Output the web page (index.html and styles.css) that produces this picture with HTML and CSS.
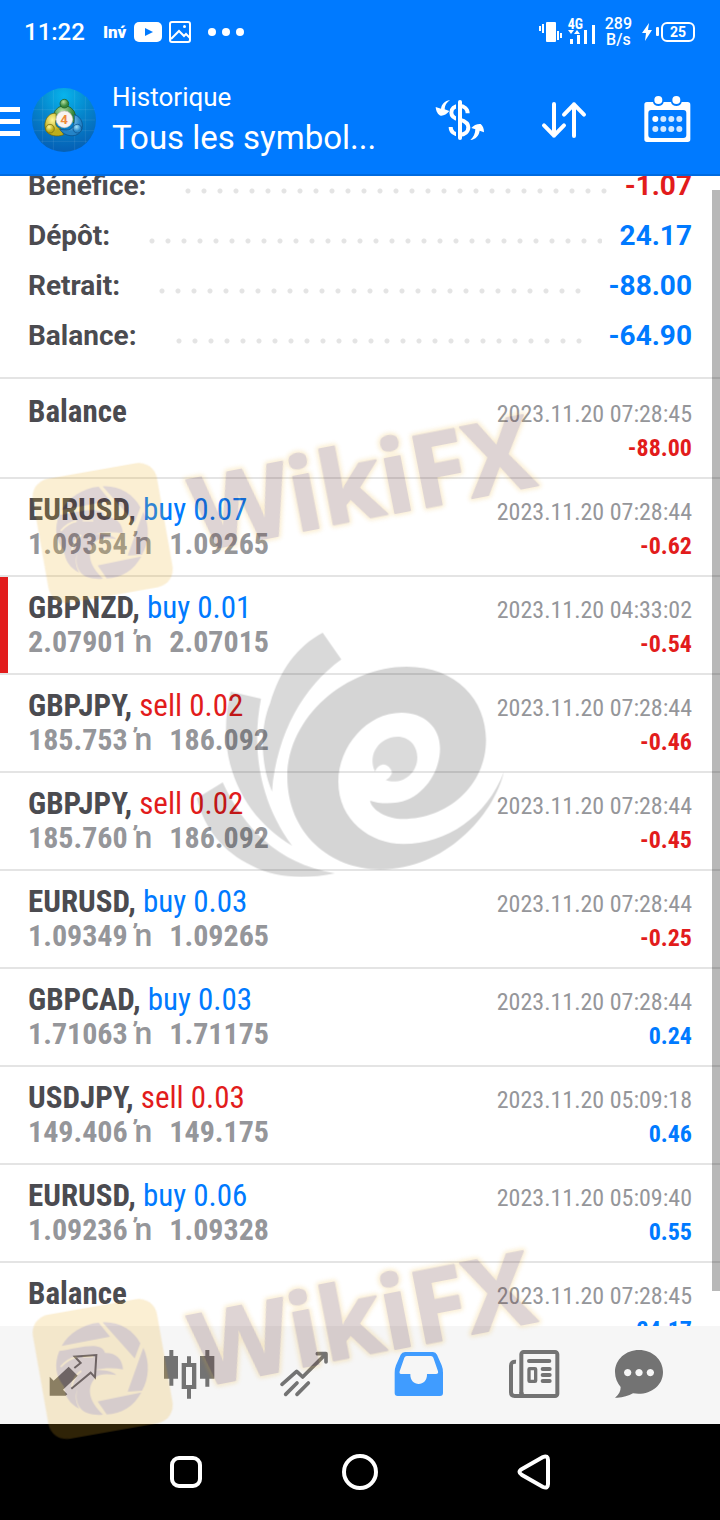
FILE: index.html
```html
<!DOCTYPE html>
<html lang="fr">
<head>
<meta charset="utf-8">
<meta name="viewport" content="width=device-width, initial-scale=1">
<title>Historique</title>
<link rel="stylesheet" href="styles.css">
</head>
<body>

<div class="statusbar">
  <span class="clock">11:22</span>
  <span class="notif-inv">Inv́</span>
  <svg class="notifs" width="112" height="24" viewBox="0 0 112 24" fill="#fff">
    <rect x="0" y="2" width="28" height="20" rx="5"/>
    <path d="M11 8l8 4-8 4z" fill="#007aff"/>
    <rect x="36" y="2" width="20" height="20" rx="2" fill="none" stroke="#fff" stroke-width="2"/>
    <path d="M37 19l8-8 5 5 2-2 4 4" fill="none" stroke="#fff" stroke-width="2"/>
    <circle cx="50.500" cy="6.500" r="1.500"/>
    <circle cx="78" cy="12" r="4"/><circle cx="92" cy="12" r="4"/><circle cx="106" cy="12" r="4"/>
  </svg>
  <span class="spacer"></span>
  <svg width="24" height="24" viewBox="0 0 24 24" fill="#fff">
    <rect x="7" y="2" width="10" height="20" rx="1"/>
    <path d="M0 6h2v5H0zM3 4h2v9H3zM18 11h2v9h-2zM21 13h2v5h-2z"/>
  </svg>
  <span class="signal">
    <span class="net">4G</span>
    <svg width="28" height="16" viewBox="0 0 28 16" fill="#fff">
      <path d="M0 2h6L3 6zM6 6h6L9 2z"/>
      <rect x="2" y="11" width="3" height="5"/><rect x="9" y="7" width="3" height="9"/><rect x="16" y="2" width="3" height="14"/>
    </svg>
    <i class="bar"></i>
  </span>
  <span class="speed">289<br>B/s</span>
  <svg width="18" height="20" viewBox="0 0 18 20" fill="#fff">
    <path d="M7 1L0 11h4L3 19l7-11H6z"/><rect x="14" y="5" width="3" height="9" rx="1"/>
  </svg>
  <span class="battery">25</span>
</div>

<header class="toolbar">
  <button class="menu" aria-label="Menu"><i></i><i></i><i></i></button>
  <svg class="avatar" viewBox="0 0 192 192" aria-hidden="true">
    <defs>
      <radialGradient id="sky" cx="50%" cy="12%" r="85%"><stop offset="0" stop-color="#08b4ec"/><stop offset=".5" stop-color="#0584cb"/><stop offset="1" stop-color="#0561b6"/></radialGradient>
      <radialGradient id="green" cx="40%" cy="30%"><stop offset="0" stop-color="#b4dfa0"/><stop offset="1" stop-color="#38883c"/></radialGradient>
      <radialGradient id="gold" cx="40%" cy="30%"><stop offset="0" stop-color="#fff696"/><stop offset="1" stop-color="#bcae1c"/></radialGradient>
      <radialGradient id="blue" cx="40%" cy="30%"><stop offset="0" stop-color="#a5e4fc"/><stop offset="1" stop-color="#2484c8"/></radialGradient>
    </defs>
    <circle cx="96" cy="96" r="96" fill="url(#sky)"/>
    <path d="M64 6v180M32 26v140M128 6v180M160 26v140M4 65h184M2 96h188M6 128h180M26 160h140" stroke="#fff" stroke-opacity=".13" stroke-width="2"/>
    <path d="M64 96a34 36 0 1 1 67-12l-4 22-16-14-25-2-18 8z" fill="url(#green)" stroke="#17551d" stroke-width="2"/>
    <path d="M72 76c-24-4-40 26-31 50 8 18 36 22 54 14l-8-18c-16-2-20-18-14-28z" fill="url(#gold)" stroke="#665f0a" stroke-width="2"/>
    <path d="M126 80c26 6 31 36 19 52-14 18-48 14-62-8l20 2c18 0 26-12 24-42z" fill="url(#blue)" stroke="#0a4a82" stroke-width="2"/>
    <circle cx="97" cy="47" r="13" fill="url(#green)" stroke="#17551d" stroke-width="2"/>
    <circle cx="54" cy="122" r="13" fill="url(#gold)" stroke="#665f0a" stroke-width="2"/>
    <circle cx="136" cy="122" r="13" fill="url(#blue)" stroke="#0a4a82" stroke-width="2"/>
    <circle cx="97" cy="94" r="25" fill="#f7f4f2" stroke="#c9c4c0" stroke-width="2"/>
    <text class="avatar-num" x="96" y="109" text-anchor="middle">4</text>
  </svg>
  <div class="titles">
    <div class="subtitle">Historique</div>
    <h1>Tous les symbol...</h1>
  </div>
  <button class="action" aria-label="Symboles">
    <svg width="52" height="48" viewBox="222 288 156 144">
      <path d="M323 340c0-14-11-22-25-22-15 0-24 8-24 20 0 14 12 18 25 21 15 4 26 9 26 23 0 13-11 22-26 22-16 0-27-9-27-23" fill="none" stroke="#fff" stroke-width="12"/>
      <path d="M291 300v118" stroke="#007aff" stroke-width="6"/>
      <path d="M300 306v108" stroke="#fff" stroke-width="12" stroke-linecap="round"/>
      <path d="M270 300c-16 3-25 12-27 26l-16-5c1 13 7 23 15 26 9 1 18-5 26-14l-14-5c0-12 6-21 16-28zM331 420c16-2 26-13 28-28l13 5c0-12-4-20-10-25-10-1-22 4-28 12l12 4c0 13-6 24-15 32z" fill="#fff"/>
    </svg>
  </button>
  <button class="action" aria-label="Trier">
    <svg width="52" height="48" viewBox="534 288 156 144" fill="none" stroke="#fff" stroke-width="12" stroke-linecap="round" stroke-linejoin="round">
      <path d="M582 312v95M552 376l30 31 30-31M642 408v-95M612 344l30-31 30 31"/>
    </svg>
  </button>
  <button class="action" aria-label="Calendrier">
    <svg width="52" height="48" viewBox="845 288 156 144" fill="#fff">
      <path fill-rule="evenodd" d="M860 306h18c2 16 30 16 32 0h22c2 16 30 16 32 0h18q8 0 8 8v104q0 8-8 8H860q-8 0-8-8V314q0-8 8-8zM873 330q-9 0-9 9v66q0 9 9 9h96q9 0 9-9v-66q0-9-9-9z"/>
      <circle cx="894" cy="300" r="12"/><circle cx="948" cy="300" r="12"/>
      <circle cx="885" cy="357" r="9"/>
      <g opacity=".82"><circle cx="909" cy="357" r="9"/><circle cx="933" cy="357" r="9"/><circle cx="957" cy="357" r="9"/><circle cx="885" cy="387" r="9"/><circle cx="909" cy="387" r="9"/><circle cx="933" cy="387" r="9"/><circle cx="957" cy="387" r="9"/></g>
    </svg>
  </button>
</header>

<main class="panel">
  <div class="content">
    <dl class="summary">
      <div class="line"><dt>Bénéfice:</dt><dd class="loss">-1.07</dd></div>
      <div class="line"><dt>Dépôt:</dt><dd>24.17</dd></div>
      <div class="line"><dt>Retrait:</dt><dd>-88.00</dd></div>
      <div class="line"><dt>Balance:</dt><dd>-64.90</dd></div>
    </dl>

    <ul class="deals">
      <li>
        <div class="deal"><b>Balance</b></div>
        <div class="result"><time>2023.11.20 07:28:45</time><strong class="loss">-88.00</strong></div>
      </li>
      <li>
        <div class="deal"><b>EURUSD,</b> <span class="buy">buy 0.07</span><div class="prices">1.09354 <i>ŉ</i> 1.09265</div></div>
        <div class="result"><time>2023.11.20 07:28:44</time><strong class="loss">-0.62</strong></div>
      </li>
      <li class="marked">
        <div class="deal"><b>GBPNZD,</b> <span class="buy">buy 0.01</span><div class="prices">2.07901 <i>ŉ</i> 2.07015</div></div>
        <div class="result"><time>2023.11.20 04:33:02</time><strong class="loss">-0.54</strong></div>
      </li>
      <li>
        <div class="deal"><b>GBPJPY,</b> <span class="sell">sell 0.02</span><div class="prices">185.753 <i>ŉ</i> 186.092</div></div>
        <div class="result"><time>2023.11.20 07:28:44</time><strong class="loss">-0.46</strong></div>
      </li>
      <li>
        <div class="deal"><b>GBPJPY,</b> <span class="sell">sell 0.02</span><div class="prices">185.760 <i>ŉ</i> 186.092</div></div>
        <div class="result"><time>2023.11.20 07:28:44</time><strong class="loss">-0.45</strong></div>
      </li>
      <li>
        <div class="deal"><b>EURUSD,</b> <span class="buy">buy 0.03</span><div class="prices">1.09349 <i>ŉ</i> 1.09265</div></div>
        <div class="result"><time>2023.11.20 07:28:44</time><strong class="loss">-0.25</strong></div>
      </li>
      <li>
        <div class="deal"><b>GBPCAD,</b> <span class="buy">buy 0.03</span><div class="prices">1.71063 <i>ŉ</i> 1.71175</div></div>
        <div class="result"><time>2023.11.20 07:28:44</time><strong>0.24</strong></div>
      </li>
      <li>
        <div class="deal"><b>USDJPY,</b> <span class="sell">sell 0.03</span><div class="prices">149.406 <i>ŉ</i> 149.175</div></div>
        <div class="result"><time>2023.11.20 05:09:18</time><strong>0.46</strong></div>
      </li>
      <li>
        <div class="deal"><b>EURUSD,</b> <span class="buy">buy 0.06</span><div class="prices">1.09236 <i>ŉ</i> 1.09328</div></div>
        <div class="result"><time>2023.11.20 05:09:40</time><strong>0.55</strong></div>
      </li>
      <li>
        <div class="deal"><b>Balance</b></div>
        <div class="result"><time>2023.11.20 07:28:45</time><strong>24.17</strong></div>
      </li>
    </ul>
  </div>
  <div class="scrollbar"></div>
</main>

<nav class="tabs">
  <button aria-label="Cotations">
    <svg viewBox="145 330 156 150">
      <path d="M150 410l12 12 45-42 27 27-44 42 13 14-5 4h-48z"/>
      <path d="M224 384l19-15-18-19 65-5-4 67-13-14-58 48" fill="none" stroke="#737373" stroke-width="6"/>
    </svg>
  </button>
  <button aria-label="Graphiques">
    <svg viewBox="487 330 156 150">
      <path d="M506 330h12v18h14v68h-14v21h-12v-21h-16v-68h16zM614 330h12v18h15v68h-15v24h-12v-24h-16v-68h16z"/>
      <path fill-rule="evenodd" d="M559 349h12v20h16v78h-16v29h-12v-29h-16v-78h16zM556 381v54h18v-54z"/>
    </svg>
  </button>
  <button aria-label="Trading">
    <svg viewBox="831 330 156 150" fill="none" stroke="#737373" stroke-width="11" stroke-linecap="round" stroke-linejoin="round">
      <path d="M843 433l44-39 18 17 68-68M949 341h26v25M854 463l34-34M888 463l34-34"/>
    </svg>
  </button>
  <button class="active" aria-label="Historique" aria-current="page">
    <svg viewBox="98 330 156 150">
      <path fill-rule="evenodd" d="M134 336h84q8 0 12 8l14 32q4 10 4 22v61q0 9-9 9H112q-9 0-9-9v-61q0-12 4-22l14-32q4-8 13-8zM139 348q-5 0-7 5l-14 41q-2 8 4 8h28c-2 40 52 40 50 0h27q8 0 6-8l-14-41q-2-5-7-5z"/>
    </svg>
  </button>
  <button aria-label="Actualités">
    <svg viewBox="442 330 156 150" fill="none" stroke="#737373" stroke-width="12">
      <rect x="482" y="336" width="108" height="132" rx="7"/>
      <path d="M466 365q-15-1-15 12v80q0 11 11 11h29q-9 0-9-12"/>
      <path d="M505 363h61M546 387h21M546 405h21M546 423h21" stroke-linecap="round"/>
      <rect x="505" y="386" width="20" height="38" rx="2" stroke-width="10"/>
    </svg>
  </button>
  <button aria-label="Messages">
    <svg viewBox="759 330 156 150">
      <path fill-rule="evenodd" d="M837 330c40 0 72 29 72 66 0 44-42 72-90 64-15 8-34 15-54 13 12-9 17-20 17-32-10-12-17-27-17-45 0-37 32-66 72-66zM803 387a11 11 0 1 0 .1 0zM837 387a11 11 0 1 0 .1 0zM871 387a11 11 0 1 0 .1 0z"/>
    </svg>
  </button>
</nav>

<div class="navbar">
  <button aria-label="Applications récentes"><svg width="40" height="40" viewBox="0 0 40 40"><rect x="6" y="6" width="28" height="28" rx="7"/></svg></button>
  <button aria-label="Accueil"><svg width="40" height="40" viewBox="0 0 40 40"><circle cx="20" cy="20" r="16"/></svg></button>
  <button aria-label="Retour"><svg width="40" height="40" viewBox="0 0 40 40"><path d="M29 5L8 17q-5 3 0 6l21 12q5 2 5-3V8q0-5-5-3z"/></svg></button>
</div>

<svg class="watermark" viewBox="0 0 720 1520" aria-hidden="true">
  <defs>
    <filter id="soft" x="-10%" y="-10%" width="120%" height="120%"><feGaussianBlur stdDeviation="2"/></filter>
    <g id="brand">
      <g transform="scale(.33333)">
        <rect x="119" y="198" width="378" height="378" rx="55" transform="rotate(-10 308 387)" fill="#ebae28" filter="url(#soft)"/>
        <g fill="#5a2a2a">
          <path d="M185 318c20-38 65-66 111-70l34 42z"/>
          <path d="M308 247c47-3 92 23 113 63l-17 45z"/>
          <path d="M430 323c20 44 17 92-4 129l-43 3z"/>
          <path d="M293 484l131-27c-22 41-60 65-104 66z"/>
          <path d="M178 333c32-4 70-15 102-15 20 1 32 9 35 21 31-1 52 17 54 49-30-5-60-4-84 2 29 0 53 4 64 15-30-4-52-3-60 6-30 28-26 70 20 113-30 3-55-4-66-17-15-17-16-38-11-60-7 19-6 39 6 59-28-14-43-36-46-67-26-29-30-67-14-106z"/>
        </g>
        <path d="M182 381c15-18 31-27 48-30M215 440c5-24 14-38 29-47M248 350h32" stroke="#ebae28" stroke-width="5" fill="none"/>
      </g>
      <g transform="rotate(-11 200 147)">
        <text class="halo" x="200" y="147" filter="url(#soft)">WikiFX</text>
        <text class="word" x="200" y="147">WikiFX</text>
      </g>
    </g>
  </defs>
  <use href="#brand" y="404" opacity=".2"/>
  <use href="#brand" y="1240" opacity=".2"/>
  <g transform="translate(180 620) scale(.33333)" opacity=".165">
    <path opacity=".9" d="M428 38l56 80C370 200 290 340 276 515 240 430 240 320 270 250c30-100 80-170 158-212z"/>
    <path opacity=".9" d="M152 215l91 21C215 380 235 540 337 678 240 620 170 530 145 410c-13-70-7-140 7-195z"/>
    <path opacity=".9" d="M50 535l78-48c62 133 162 243 337 273-90 18-180 15-250-23C130 695 75 630 50 535z"/>
    <path d="M972 455C940 590 790 750 600 748 450 748 322 640 322 470c0-180 178-330 358-330 150 0 238 100 238 220 0 140-118 237-248 237-50 0-95-27-100-55 30 11 80 10 110-2 60-25 100-90 100-155s-50-107-115-107c-105 0-190 102-190 207 0 115 95 187 195 187 130 0 250-82 302-217z"/>
    <path opacity=".85" d="M585 455c-25-55 17-105 67-105 38 0 60 30 60 62 0 53-52 85-95 68q15-8 19-22-6-23-26-25-18 2-25 22z"/>
  </g>
</svg>

</body>
</html>
```

FILE: styles.css
```css
:root {
  --blue: #007aff;
  --red: #e21c1c;
  --ink: #4b4b50;
  --grey: #95969a;
  --line: #e4e4e4;
  --narrow: "Roboto Condensed", "Liberation Sans Narrow", Roboto, sans-serif;
}
*{box-sizing:border-box;margin:0;padding:0;}
body{
  position:relative;
  display:flex;
  flex-direction:column;
  height:100vh;
  background:#fff;
  color:var(--ink);
  font-family:Roboto, sans-serif;
  overflow:hidden;
}
button{
  display:flex;
  align-items:center;
  justify-content:center;
  border:none;
  background:none;
  cursor:pointer;
}
svg{display:block;flex:none;}

/* system status */
.statusbar{
  display:flex;
  align-items:center;
  height:64px;
  padding:0 25px 0 24px;
  background:var(--blue);
  color:#fff;
  font-weight:500;
}
.clock{font-size:24px;margin-right:18px;}
.notif-inv{font-size:17px;font-weight:900;width:31px;}
.spacer{flex:1;}
.signal{position:relative;width:28px;height:28px;margin:0 9px 0 5px;}
.net{display:block;font:700 14px/12px var(--narrow);}
.signal svg{margin-top:-2px;}
.bar{position:absolute;right:1px;top:7px;width:3px;height:19px;background:#fff;}
.speed{font-size:16px;line-height:16px;text-align:center;margin-right:10px;}
.battery{
  width:34px;
  height:20px;
  border:2px solid #fff;
  border-radius:6px;
  font-size:14px;
  font-weight:700;
  line-height:16px;
  text-align:center;
  margin-left:1px;
}

/* app toolbar */
.toolbar{
  display:flex;
  align-items:center;
  height:112px;
  background:var(--blue);
  color:#fff;
  box-shadow:inset 0 -2px #006be0;
}
.menu{
  flex-direction:column;
  align-items:flex-start;
  gap:7px;
  width:32px;
  padding-top:3px;
}
.menu i{width:20px;height:5px;background:#fff;}
.avatar{width:64px;height:64px;}
.avatar-num{font:700 40px Roboto, sans-serif;fill:#ee8b3a;}
.titles{flex:1;min-width:0;padding-left:16px;}
.subtitle{font-size:26px;line-height:36px;}
h1{font-size:33px;font-weight:400;line-height:46px;white-space:nowrap;}
.action{width:104px;height:100%;}

/* scrolled list */
.panel{position:relative;flex:1;min-height:0;overflow:hidden;}
.content{margin-top:-15px;}
.summary{padding-bottom:16px;border-bottom:2px solid var(--line);}
.line{
  display:flex;
  align-items:center;
  height:50px;
  padding:0 28px 2px;
  font-size:28px;
  font-weight:700;
}
.line::after{
  content:"";
  order:1;
  flex:1;
  height:6px;
  margin:12px 18px 0 39px;
  background:radial-gradient(circle at 3px 3px, var(--line) 2px, transparent 3px) 0 0 / 16px 6px repeat-x;
}
.line dd{order:2;color:var(--blue);}
.line .loss{color:var(--red);}
.deals{list-style:none;padding-top:2px;}
.deals li{
  display:flex;
  justify-content:space-between;
  height:98px;
  padding:14px 28px 0;
  border-bottom:2px solid var(--line);
  font-family:var(--narrow);
}
.deals .marked{box-shadow:inset 8px 0 var(--red);}
.deal{font-size:31px;line-height:34px;white-space:nowrap;}
.buy{color:var(--blue);}
.sell{color:var(--red);}
.prices{color:var(--grey);font-size:30px;font-weight:700;}
.prices i{font-family:Roboto, sans-serif;font-size:32px;line-height:30px;font-style:normal;font-weight:500;margin-right:10px;}
.result{
  display:flex;
  flex-direction:column;
  align-items:flex-end;
  padding-top:2px;
  font-size:24px;
  line-height:34px;
}
.result time{color:var(--grey);}
.result strong{color:var(--blue);}
.result .loss{color:var(--red);}
.scrollbar{
  position:absolute;
  top:14px;
  right:0;
  bottom:35px;
  width:8px;
  background:rgba(0,0,0,.28);
}

/* bottom bars */
.tabs{
  display:grid;
  grid-template-columns:repeat(5, 115fr) 96fr;
  height:98px;
  padding:0 33px 0 16px;
  background:#f6f6f6;
}
.tabs svg{width:52px;height:50px;fill:#737373;}
.tabs svg[fill="none"]{fill:none;}
.tabs .active svg{fill:#409cff;}
.navbar{
  display:flex;
  justify-content:center;
  height:96px;
  background:#000;
}
.navbar button{width:174px;}
.navbar svg{fill:none;stroke:#fff;stroke-width:4;}

.watermark{
  position:absolute;
  inset:0;
  width:100%;
  pointer-events:none;
}
.halo,.word{
  font:700 101px "Open Sans", sans-serif;
  fill:#5a2a2a;
  stroke:#5a2a2a;
  stroke-width:2;
  stroke-linejoin:round;
}
.halo{fill:#ebae28;stroke:#ebae28;stroke-width:6;}
```
